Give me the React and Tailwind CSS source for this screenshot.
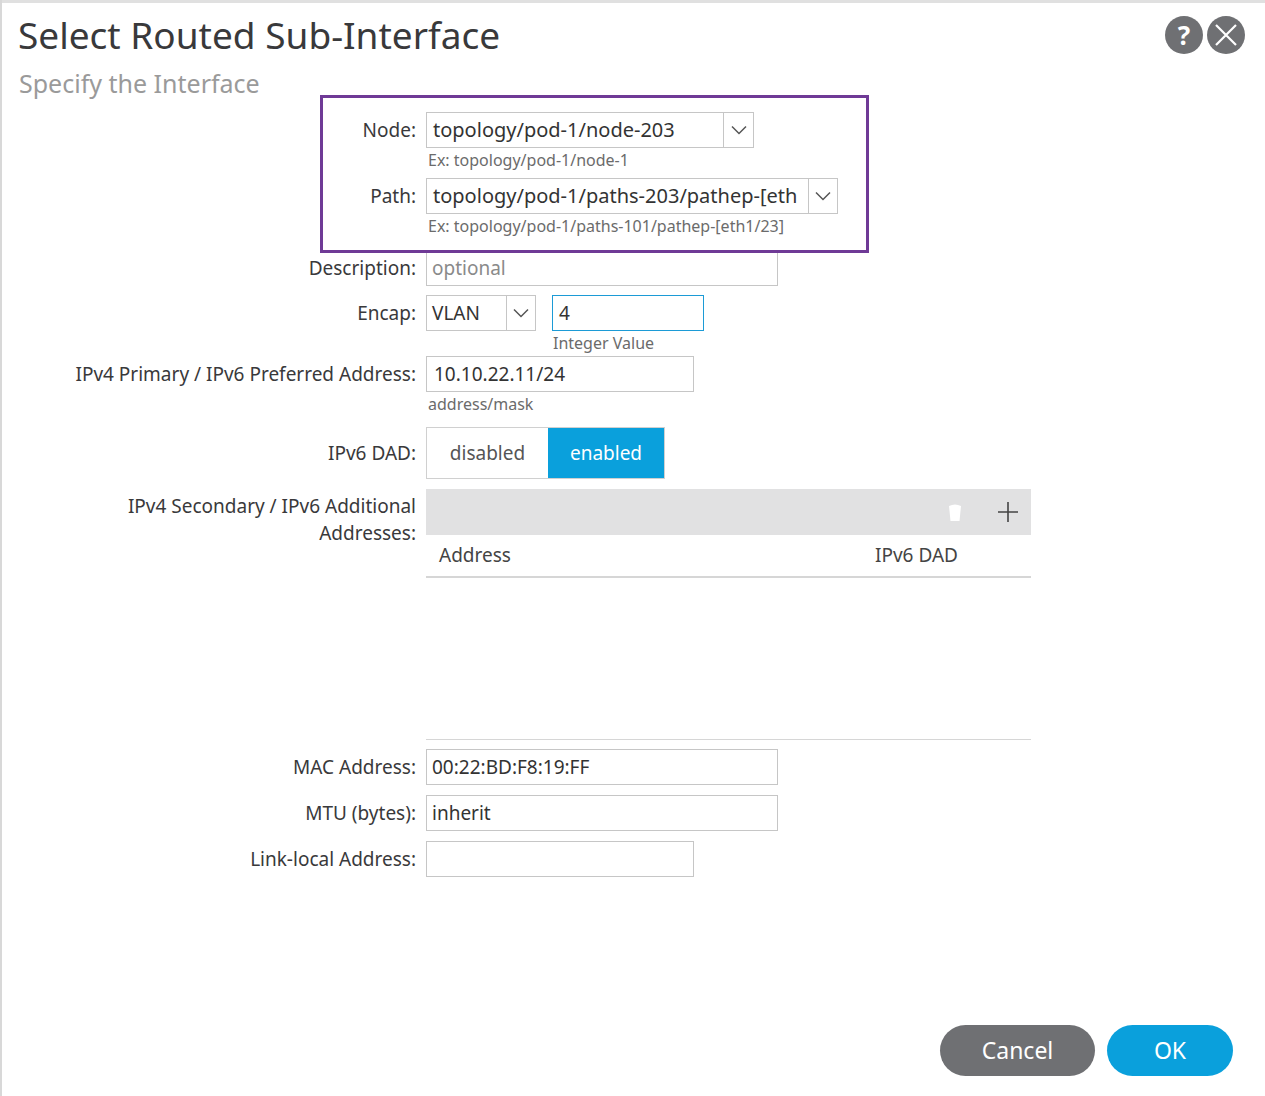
export default function App() {
  const label = "w-[424px] shrink-0 text-right pr-[10px] text-[19px] text-[#39393b]";
  const input = "h-[36px] border border-[#c6c6c6] bg-white px-[5px] flex items-center text-[19px]";
  const hint = "text-[16px] text-[#6b6b6b] leading-[20px]";
  const Chev = () => (
    <svg width="16" height="10" viewBox="0 0 16 10"><path d="M1 1.5 L8 8.5 L15 1.5" fill="none" stroke="#555" strokeWidth="1.5" /></svg>
  );
  return (
    <div className="w-[1265px] h-[1096px] bg-white relative overflow-hidden border-l-2 border-[#d8d8d8]" style={{ fontFamily: '"Noto Sans", "Open Sans", sans-serif' }}>
      <div className="h-[3px] bg-[#e0e0e0] w-full" />
      <div className="flex justify-between items-start px-[16px] pt-[8px]">
        <div className="text-[37px] text-[#39393b] leading-[48px]">Select Routed Sub-Interface</div>
        <div className="flex gap-[4px] mt-[5px] mr-[4px]">
          <div className="w-[38px] h-[38px] rounded-full bg-[#6f7073] flex items-center justify-center text-white text-[26px] font-bold">?</div>
          <div className="w-[38px] h-[38px] rounded-full bg-[#6f7073] flex items-center justify-center">
            <svg width="24" height="24" viewBox="0 0 24 24"><path d="M2 2 L22 22 M22 2 L2 22" stroke="white" strokeWidth="2.2" /></svg>
          </div>
        </div>
      </div>
      <div className="px-[17px] text-[25px] text-[#9a9a9a] leading-[32px] mt-[8px]">Specify the Interface</div>

      <div className="absolute left-[318px] top-[95px] w-[549px] h-[158px] border-[3px] border-[#6f3a96]" />

      <div className="mt-[13px]">
        <div className="flex items-center h-[36px]">
          <div className={label}>Node:</div>
          <div className="flex h-[36px] w-[328px] border border-[#c6c6c6]">
            <div className="flex-1 px-[6px] flex items-center text-[20px] text-[#333]">topology/pod-1/node-203</div>
            <div className="w-[30px] border-l border-[#c6c6c6] flex items-center justify-center"><Chev /></div>
          </div>
        </div>
        <div className="flex"><div className="w-[426px]" /><div className={hint + " mt-[2px]"}>Ex: topology/pod-1/node-1</div></div>
        <div className="flex items-center h-[36px] mt-[8px]">
          <div className={label}>Path:</div>
          <div className="flex h-[36px] w-[412px] border border-[#c6c6c6]">
            <div className="flex-1 px-[6px] flex items-center text-[20px] text-[#333] overflow-hidden whitespace-nowrap">topology/pod-1/paths-203/pathep-[eth</div>
            <div className="w-[29px] border-l border-[#c6c6c6] flex items-center justify-center"><Chev /></div>
          </div>
        </div>
        <div className="flex"><div className="w-[426px]" /><div className={hint + " mt-[2px]"}>Ex: topology/pod-1/paths-101/pathep-[eth1/23]</div></div>

        <div className="flex items-center mt-[14px]">
          <div className={label}>Description:</div>
          <div className={input + " w-[352px] text-[#8a8a8a]"}>optional</div>
        </div>
        <div className="flex items-center mt-[9px]">
          <div className={label}>Encap:</div>
          <div className="flex h-[36px] w-[110px] border border-[#c6c6c6]">
            <div className="flex-1 px-[5px] flex items-center text-[19px] text-[#333]">VLAN</div>
            <div className="w-[29px] border-l border-[#c6c6c6] flex items-center justify-center"><Chev /></div>
          </div>
          <div className="ml-[16px] h-[36px] w-[152px] border border-[#1c9bd6] px-[6px] flex items-center text-[19px] text-[#333]">4</div>
        </div>
        <div className="flex"><div className="w-[551px]" /><div className={hint + " mt-[2px]"}>Integer Value</div></div>
        <div className="flex items-center mt-[3px]">
          <div className={label}>IPv4 Primary / IPv6 Preferred Address:</div>
          <div className={input + " w-[268px] text-[#333] px-[7px]"}>10.10.22.11/24</div>
        </div>
        <div className="flex"><div className="w-[426px]" /><div className={hint + " mt-[2px]"}>address/mask</div></div>
        <div className="flex items-center mt-[13px]">
          <div className={label}>IPv6 DAD:</div>
          <div className="flex h-[52px] border border-[#d0d0d0]">
            <div className="w-[121px] flex items-center justify-center text-[19px] text-[#555] bg-white">disabled</div>
            <div className="w-[116px] flex items-center justify-center text-[19px] text-white bg-[#0aa0dc]">enabled</div>
          </div>
        </div>
        <div className="flex mt-[10px]">
          <div className={label + " leading-[27px] pt-[4px]"}>IPv4 Secondary / IPv6 Additional<br />Addresses:</div>
          <div className="w-[605px]">
            <div className="h-[46px] bg-[#e1e1e2] flex items-center justify-end gap-[34px] pr-[12px]">
              <svg width="16" height="20" viewBox="0 0 16 20"><path d="M2 4 Q8 1 14 4 L12.5 19 L3.5 19 Z" fill="white" /></svg>
              <svg width="22" height="22" viewBox="0 0 22 22"><path d="M11 1 V21 M1 11 H21" stroke="#444" strokeWidth="1.6" /></svg>
            </div>
            <div className="h-[43px] border-b-2 border-[#d6d6d6] flex items-center text-[19px] text-[#444]">
              <div className="pl-[13px] w-[449px]">Address</div>
              <div>IPv6 DAD</div>
            </div>
            <div className="h-[162px] border-b border-[#d6d6d6]" />
          </div>
        </div>
        <div className="flex items-center mt-[9px]">
          <div className={label}>MAC Address:</div>
          <div className={input + " w-[352px] text-[#333]"}>00:22:BD:F8:19:FF</div>
        </div>
        <div className="flex items-center mt-[10px]">
          <div className={label}>MTU (bytes):</div>
          <div className={input + " w-[352px] text-[#333]"}>inherit</div>
        </div>
        <div className="flex items-center mt-[10px]">
          <div className={label}>Link-local Address:</div>
          <div className={input + " w-[268px]"} />
        </div>
      </div>

      <div className="absolute right-[32px] bottom-[20px] flex gap-[12px]">
        <div className="w-[155px] h-[51px] rounded-full bg-[#6f7073] text-white text-[23px] flex items-center justify-center">Cancel</div>
        <div className="w-[126px] h-[51px] rounded-full bg-[#0aa0dc] text-white text-[23px] flex items-center justify-center">OK</div>
      </div>
    </div>
  );
}
